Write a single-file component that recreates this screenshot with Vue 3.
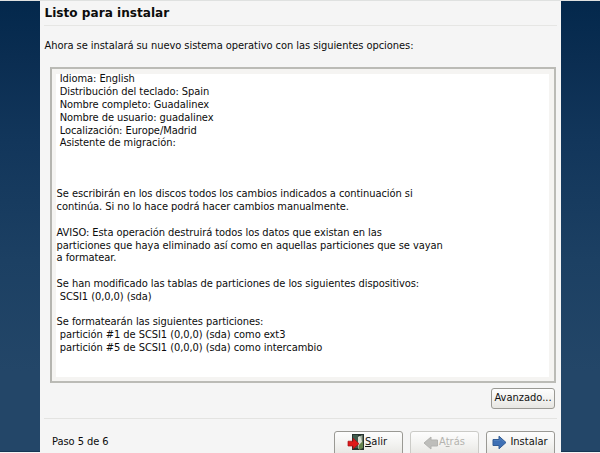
<script setup>
const lines = [
  ' Idioma: English',
  ' Distribución del teclado: Spain',
  ' Nombre completo: Guadalinex',
  ' Nombre de usuario: guadalinex',
  ' Localización: Europe/Madrid',
  ' Asistente de migración:',
  '',
  '',
  '',
  'Se escribirán en los discos todos los cambios indicados a continuación si',
  'continúa. Si no lo hace podrá hacer cambios manualmente.',
  '',
  'AVISO: Esta operación destruirá todos los datos que existan en las',
  'particiones que haya eliminado así como en aquellas particiones que se vayan',
  'a formatear.',
  '',
  'Se han modificado las tablas de particiones de los siguientes dispositivos:',
  ' SCSI1 (0,0,0) (sda)',
  '',
  'Se formatearán las siguientes particiones:',
  ' partición #1 de SCSI1 (0,0,0) (sda) como ext3',
  ' partición #5 de SCSI1 (0,0,0) (sda) como intercambio',
]
</script>

<template>
  <div class="desktop">
    <main class="window">
      <h1>Listo para instalar</h1>
      <p class="intro">Ahora se instalará su nuevo sistema operativo con las siguientes opciones:</p>
      <section class="frame">
        <div class="summary"><div v-for="(line, i) in lines" :key="i" class="line">{{ line }}</div></div>
      </section>
      <div class="advanced"><button>Avanzado...</button></div>
      <footer>
        <span class="step">Paso 5 de 6</span>
        <button class="quit">
          <svg width="18" height="17" viewBox="0 0 18 17">
            <path d="M5 0H17V16H5Z" fill="#26332e" />
            <path d="M6 1H11V14H6Z" fill="#415b4c" />
            <path d="M11 3L15.5 1V13L11 15Z" fill="#9fae9b" />
            <path d="M11 3L13 2L15 8L11 12Z" fill="#d9ddd2" />
            <path d="M12 11L16 7V14L12 16Z" fill="#66834d" />
            <path d="M1 7.2H6V4.2L12 9.7L6 15V12H1Z" fill="#df1919" stroke="#a30c12" stroke-width=".7" />
          </svg>
          <span><u>S</u>alir</span>
        </button>
        <button class="back" disabled>
          <svg width="16" height="14" viewBox="0 0 16 14">
            <path d="M14.5 4H8V1L1 7L8 13V10H14.5Z" fill="#bebebb" stroke="#b3b3b0" />
          </svg>
          <span>A<u>t</u>rás</span>
        </button>
        <button class="install">
          <svg width="15" height="15" viewBox="0 0 15 15">
            <path d="M1 4.5H7V1.2L14 7.5L7 13.8V10.5H1Z" fill="#3e70b5" stroke="#325c95" />
            <path d="M2 5.5H8V3.5L12 7" fill="none" stroke="#4f7fbd" />
          </svg>
          <span>Instalar</span>
        </button>
      </footer>
    </main>
  </div>
</template>

<style>
body { margin: 0; overflow: hidden; }
</style>

<style scoped>
* { box-sizing: border-box; }
.desktop {
  height: 453px;
  padding: 0 39px 0 40px;
  overflow: hidden;
  border-top: 1px solid #dfe1e0;
  background: linear-gradient(#03284c 0, #0a2d51 55px, #12365b 140px, #1c4063 260px, #234668 370px, #234668 450px, #173654 450px, #173654 451px, #f4f4f4 451px);
  font: 11px/12.8px "DejaVu Sans Condensed", "DejaVu Sans", sans-serif;
  color: #0c0c0c;
}
.window {
  display: flex;
  flex-direction: column;
  width: 521px;
  height: 452px;
  padding: 0 4px;
  background: #f5f5f5;
}
h1 {
  height: 25px;
  flex: none;
  margin: 0;
  padding: 4px 0 0 .5px;
  border-bottom: 1px solid #e6e6e4;
  font-family: "DejaVu Sans", sans-serif;
  font-size: 12.1px;
  line-height: 16px;
}
.intro { margin: 0; padding: 14px 0 0 .5px; height: 41px; flex: none; white-space: nowrap; letter-spacing: -.05px; }
.frame {
  flex: none;
  width: 506px;
  height: 316px;
  margin-left: 6px;
  padding: 5px 5px 4px 4px;
  border: 2px solid #bbbbb6;
  border-left-color: #b5b5b0;
  background: #f5f4f2;
}
.summary { height: 100%; padding: 0 0 0 .6px; background: #fff; letter-spacing: -.06px; }
.line { position: relative; top: -.7px; height: 12.8px; white-space: pre; }
button {
  display: flex;
  align-items: center;
  justify-content: center;
  border: 1px solid #9a9994;
  border-radius: 3px;
  padding: 0;
  background: linear-gradient(#fdfdfd, #f3f3f1 50%, #e7e6e2);
  color: #111;
  font: inherit;
  white-space: nowrap;
}
.advanced { display: flex; justify-content: flex-end; padding: 5px 2px 0 0; height: 35px; flex: none; }
.advanced button { width: 64px; height: 21px; }
footer { display: flex; height: 35px; flex: none; border-top: 1px solid #e3e3e1; padding: 12px 2px 0 8px; }
.step { flex: 1; padding-top: 5px; letter-spacing: -.05px; }
footer button { height: 25px; flex: none; padding-bottom: 2px; }
.quit { width: 69px; margin-right: 7px; padding-right: 3px; }
.back { width: 69px; margin-right: 7px; padding-right: 1px; color: #b4b3af; border-color: #cbcbc7; }
.install { width: 69px; gap: 3px; padding-right: 1px; }
svg { display: block; flex: none; }
u { text-underline-offset: 1px; }
</style>
